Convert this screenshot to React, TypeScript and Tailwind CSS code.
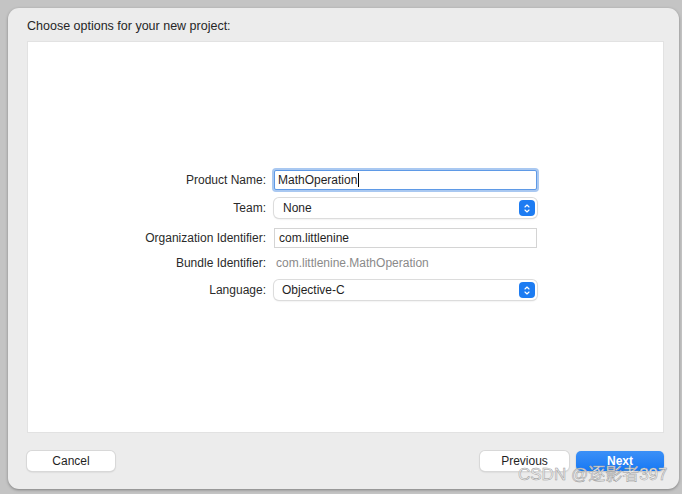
import { ChevronDown, ChevronUp } from "lucide-react"

const font = { fontFamily: "'Liberation Sans', 'Noto Sans', 'Noto Sans CJK SC', sans-serif" }

function Stepper() {
  return (
    <span className="flex h-[16px] w-[16px] flex-col items-center justify-center rounded-[4px] bg-[#1d7cf2] text-white">
      <ChevronUp className="-mb-[3px] h-[8px] w-[8px]" strokeWidth={3.5} />
      <ChevronDown className="h-[8px] w-[8px]" strokeWidth={3.5} />
    </span>
  )
}

function Row({ label, children, className = "" }: { label: string; children: React.ReactNode; className?: string }) {
  return (
    <div className={`flex h-[20px] items-center ${className}`}>
      <div className="w-[238px] text-right text-[12px] text-[#2a2a2a]">{label}</div>
      <div className="ml-[8px] w-[263px]">{children}</div>
    </div>
  )
}

export default function App() {
  return (
    <div className="relative h-[494px] w-[682px] overflow-hidden bg-[#c4c4c4] pb-[5px] pl-[8px] pr-[3px] pt-[8px]" style={font}>
      {/* Window */}
      <div className="flex h-full flex-col rounded-[11px] bg-[#ececec] pb-[18px] pl-[19px] pr-[15px] pt-[10px] shadow-[0_1px_3px_rgba(0,0,0,0.35)]">
        <div className="text-[12.5px] leading-[16px] text-[#262626]">Choose options for your new project:</div>

        <div className="ml-[1px] mr-[1px] mt-[8px] h-[390px] bg-white pt-[128px] shadow-[0_0_0_1px_#e2e2e2]">
          <Row label="Product Name:">
            <div className="flex h-[20px] items-center rounded-[2px] border border-[#5f9ae6] bg-white pl-[3px] text-[12px] text-[#1f1f1f] shadow-[0_0_0_2px_#a9c8f1]">
              MathOperation
              <span className="ml-[1px] inline-block h-[14px] w-[1px] bg-black" />
            </div>
          </Row>

          <Row label="Team:" className="mt-[8px]">
            <div className="flex h-[20px] items-center justify-between rounded-[5px] bg-white pl-[9px] pr-[2px] text-[12px] text-[#1f1f1f] shadow-[0_0_0_1px_#dcdcdc,0_1px_2px_rgba(0,0,0,0.15)]">
              None
              <Stepper />
            </div>
          </Row>

          <Row label="Organization Identifier:" className="mt-[10px]">
            <div className="flex h-[20px] items-center border border-[#d4d4d4] bg-white pl-[4px] text-[12px] text-[#1f1f1f]">
              com.littlenine
            </div>
          </Row>

          <Row label="Bundle Identifier:" className="mt-[5px]">
            <div className="pl-[2px] text-[12px] text-[#8a8a8a]">com.littlenine.MathOperation</div>
          </Row>

          <Row label="Language:" className="mt-[7px]">
            <div className="flex h-[20px] items-center justify-between rounded-[5px] bg-white pl-[8px] pr-[2px] text-[12px] text-[#1f1f1f] shadow-[0_0_0_1px_#dcdcdc,0_1px_2px_rgba(0,0,0,0.15)]">
              Objective-C
              <Stepper />
            </div>
          </Row>
        </div>

        {/* Footer buttons */}
        <div className="mt-auto flex items-center">
          <button className="h-[20px] w-[88px] rounded-[5px] bg-white text-[12px] text-[#1f1f1f] shadow-[0_0_0_1px_#d8d8d8,0_1px_2px_rgba(0,0,0,0.18)]">
            Cancel
          </button>
          <div className="ml-auto flex gap-[7px]">
            <button className="h-[20px] w-[89px] rounded-[5px] bg-white text-[12px] text-[#1f1f1f] shadow-[0_0_0_1px_#d8d8d8,0_1px_2px_rgba(0,0,0,0.18)]">
              Previous
            </button>
            <button className="h-[20px] w-[88px] rounded-[5px] bg-gradient-to-b from-[#3b90f7] to-[#1478f4] text-[12px] font-bold text-white shadow-[0_1px_2px_rgba(0,0,0,0.2)]">
              Next
            </button>
          </div>
        </div>
      </div>

      {/* Watermark */}
      <div
        className="absolute left-[518px] top-[464px] text-[17px] leading-[22px] text-[#f2f2f2]"
        style={{ fontFamily: "'Liberation Sans', 'Noto Sans CJK SC', sans-serif", WebkitTextStroke: "0.5px #9a9a9a" }}
      >
        CSDN @逐影者397
      </div>
    </div>
  )
}
